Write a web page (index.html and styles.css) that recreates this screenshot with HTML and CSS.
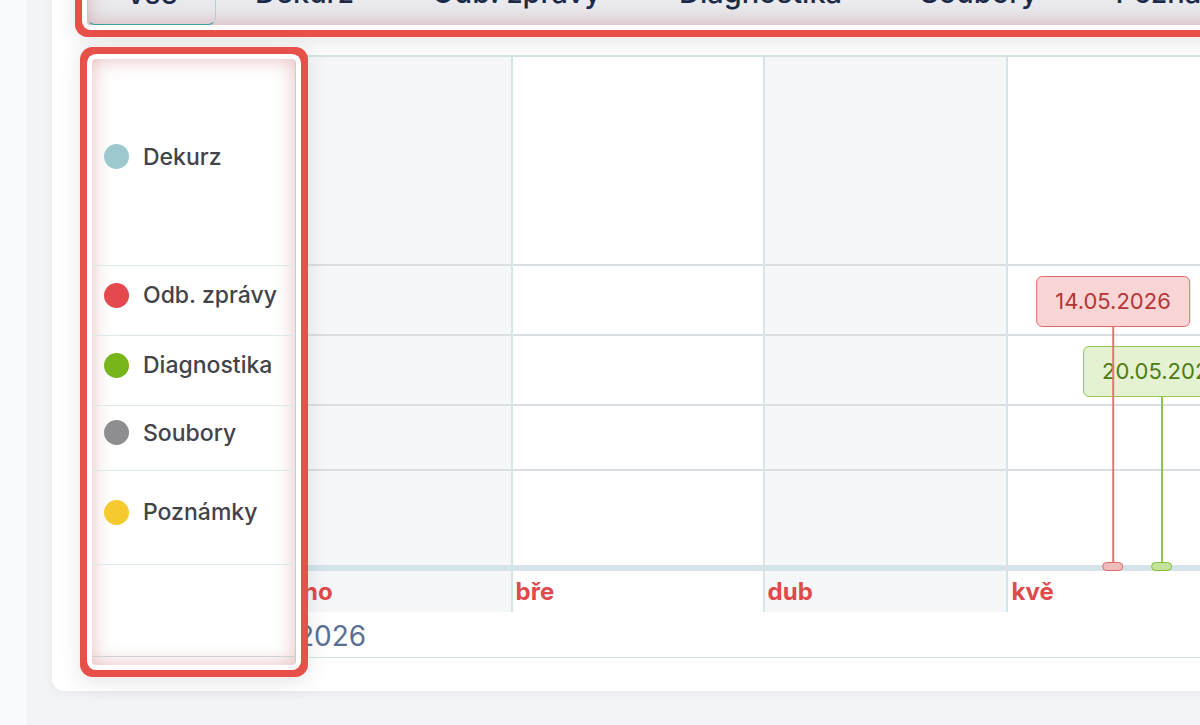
FILE: index.html
```html
<html>
<head>
	<title>Časová osa pacienta</title>
	<link rel="stylesheet" href="styles.css">
</head>
<body>
<div class="page">
	<div class="rail"></div>
	<div class="main">
		<div class="card">

			<div class="tabs spot">
				<div class="tab active">Vše</div>
				<div class="tab">Dekurz</div>
				<div class="tab">Odb. zprávy</div>
				<div class="tab">Diagnostika</div>
				<div class="tab">Soubory</div>
				<div class="tab">Poznámky</div>
			</div>

			<div class="timeline">
				<div class="labels spot">
					<div class="lrow l-dekurz"><span class="dot c-teal"></span>Dekurz</div>
					<div class="lrow l-odb"><span class="dot c-red"></span>Odb. zprávy</div>
					<div class="lrow l-diag"><span class="dot c-green"></span>Diagnostika</div>
					<div class="lrow l-soub"><span class="dot c-gray"></span>Soubory</div>
					<div class="lrow l-pozn"><span class="dot c-yellow"></span>Poznámky</div>
					<div class="lrow l-foot"></div>
				</div>

				<div class="chart">
					<div class="months">
						<!-- 8.13px per day -->
						<div class="month shade" style="width:227.6px">
							<div class="lane l-dekurz"></div><div class="lane l-odb"></div><div class="lane l-diag"></div><div class="lane l-soub"></div><div class="lane l-pozn"></div>
							<div class="axis"></div>
							<div class="mlabel">úno</div>
						</div>
						<div class="month" style="width:252px">
							<div class="lane l-dekurz"></div><div class="lane l-odb"></div><div class="lane l-diag"></div><div class="lane l-soub"></div><div class="lane l-pozn"></div>
							<div class="axis"></div>
							<div class="mlabel">bře</div>
						</div>
						<div class="month shade" style="width:243.9px">
							<div class="lane l-dekurz"></div><div class="lane l-odb"></div><div class="lane l-diag"></div><div class="lane l-soub"></div><div class="lane l-pozn"></div>
							<div class="axis"></div>
							<div class="mlabel">dub</div>
						</div>
						<div class="month" style="width:252px">
							<div class="lane l-dekurz"></div><div class="lane l-odb"></div><div class="lane l-diag"></div><div class="lane l-soub"></div><div class="lane l-pozn"></div>
							<div class="axis"></div>
							<div class="mlabel">kvě</div>
						</div>
						<div class="month shade" style="width:243.9px">
							<div class="lane l-dekurz"></div><div class="lane l-odb"></div><div class="lane l-diag"></div><div class="lane l-soub"></div><div class="lane l-pozn"></div>
							<div class="axis"></div>
							<div class="mlabel">čvn</div>
						</div>
					</div>
					<div class="year">2026</div>

					<div class="events">
						<div class="event ev-green" style="left:879px;top:289px">
							<div class="ev-box">20.05.2026</div>
							<div class="ev-stem"></div>
							<div class="ev-pin"></div>
						</div>
						<div class="event ev-red" style="left:830px;top:219px">
							<div class="ev-box">14.05.2026</div>
							<div class="ev-stem"></div>
							<div class="ev-pin"></div>
						</div>
					</div>
				</div>
			</div>

		</div>
	</div>
</div>
</body>
</html>
```

FILE: styles.css
```css
* { box-sizing: border-box; }
body {
	margin: 0;
	font-family: Inter, "Noto Sans", sans-serif;
	background: #f3f4f6;
}
.page {
	display: flex;
	height: 725px;
	overflow: hidden;
}
.rail {
	width: 27px;
	flex: none;
	background: #fafbfc;
}
.main {
	flex: 1;
	min-width: 0;
	padding-left: 25px;
}
.card {
	width: 1300px;
	margin-top: -60px;
	padding: 20px 0 26px 35px;
	background: #fff;
	border-radius: 12px;
	box-shadow: 0 2px 10px rgba(30,40,60,.06);
}

/* highlighted element: white gap, red ring, soft glow */
.spot {
	position: relative;
	z-index: 3;
	border-radius: 4px;
	box-shadow:
		inset 0 0 20px rgba(185,70,70,.36),
		0 0 0 5px #fff,
		0 0 0 12px #e8504a,
		0 4px 22px 12px rgba(40,40,50,.12);
}

/* tabs */
.tabs {
	display: flex;
	height: 65px;
	background: linear-gradient(#f0f1f4, #e6e7eb);
}
.tab {
	display: flex;
	align-items: flex-end;
	padding: 0 39px 15px;
	font-size: 29px;
	font-weight: 500;
	line-height: 35px;
	color: #1c2a4a;
	white-space: nowrap;
}
.tab.active {
	width: 129px;
	justify-content: center;
	padding: 0 0 13px;
	border: 1.5px solid #bfcacf;
	border-top: none;
	border-bottom-color: #3a9ea0;
	border-radius: 0 0 8px 8px;
}

/* timeline */
.timeline {
	display: flex;
	align-items: flex-start;
	margin-top: 30px;
	margin-left: 5px;
}
.labels {
	width: 204px;
	flex: none;
	margin-top: 4px;
	padding-bottom: 8px;
	background: #fff;
	border-right: 1px solid #c9cdd0;
}
.lrow {
	display: flex;
	align-items: center;
	gap: 14px;
	padding: 0 0 11px 12px;
	border-bottom: 1px solid #dce8ea;
	font-size: 23px;
	font-weight: 500;
	color: #43434a;
}
.labels .l-dekurz { height: 207px; }
.labels .l-foot { height: 92px; border-bottom-color: #cfd2d4; }
.dot {
	width: 25px;
	height: 25px;
	border-radius: 50%;
	flex: none;
}
.c-teal { background: #9cc8ce; }
.c-red { background: #e5484d; }
.c-green { background: #78b51b; }
.c-gray { background: #8e8e91; }
.c-yellow { background: #f6c92e; }

.chart {
	flex: 1;
	min-width: 0;
	margin-left: -13px;
	position: relative;
	overflow: hidden;
	border-top: 2px solid #d5e3e6;
}
.months { display: flex; }
.month {
	flex: none;
	border-left: 2px solid #d6e5e8;
	background: #fff;
}
.month.shade { background: #f6f7f9; }

.l-dekurz { height: 209px; }
.l-odb { height: 70px; }
.l-diag { height: 70px; }
.l-soub { height: 65px; }
.l-pozn { height: 94px; }
.lane { border-bottom: 2px solid #d9dfe2; }
.lane.l-pozn { border-bottom: none; }

.axis {
	height: 6px;
	margin-left: -2px;
	background: #d5e4ea;
}
.mlabel {
	height: 41px;
	line-height: 41px;
	padding-left: 3px;
	font-size: 24px;
	font-weight: 700;
	color: #e04a4a;
}
.year {
	height: 46px;
	padding: 3px 0 0 14px;
	line-height: 42px;
	font-size: 28px;
	color: #5b6f96;
	background: #fff;
	border-bottom: 1px solid #d5e3e6;
}

/* date markers */
.events {
	position: absolute;
	top: 0;
	left: 0;
	right: 0;
	height: 514px;
}
.event {
	position: absolute;
	bottom: 0;
	display: flex;
	flex-direction: column;
	align-items: center;
	transform: translateX(-50%);
}
.ev-box {
	position: relative;
	z-index: 1;
	height: 51px;
	padding: 0 18px;
	line-height: 48px;
	font-size: 22px;
	white-space: nowrap;
	border: 1.5px solid;
	border-radius: 6px;
}
.ev-stem {
	position: relative;
	z-index: 2;
	flex: 1;
	width: 2px;
}
.ev-pin {
	width: 21px;
	height: 9px;
	border: 1.5px solid;
	border-radius: 5px;
}
.ev-red .ev-box { background: #f9d5d5; border-color: #e06a6a; color: #b53636; }
.ev-red .ev-stem { background: #e77272; }
.ev-red .ev-pin { background: #efbcbc; border-color: #e06a6a; }
.ev-green .ev-box { background: #e5f2d2; border-color: #93c651; color: #4d7c12; }
.ev-green .ev-stem { background: #8cc43f; }
.ev-green .ev-pin { background: #c3e29b; border-color: #86bf3a; }
```
